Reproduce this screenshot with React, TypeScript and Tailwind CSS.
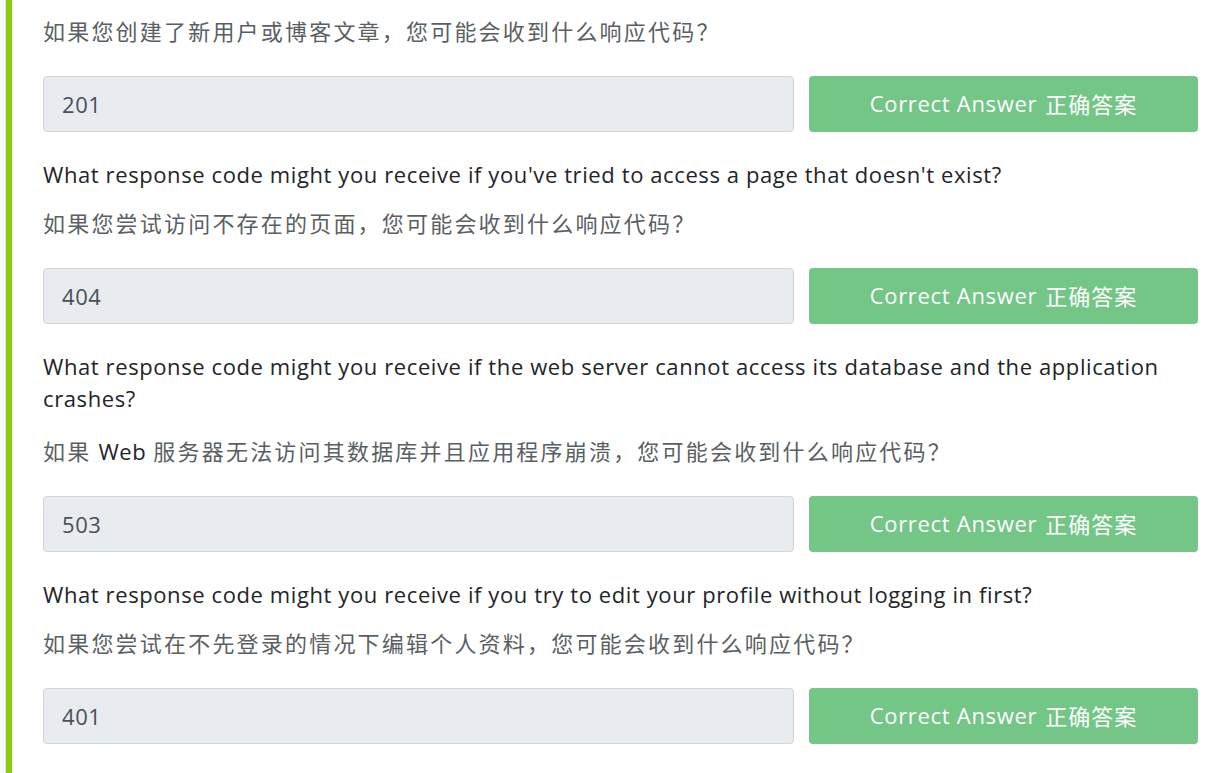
import React from "react";

const latin = { fontFamily: '"Open Sans", "Noto Sans CJK SC", sans-serif' };
const cjk = { fontFamily: '"Noto Sans CJK SC", sans-serif' };

type Q = { en?: string; zh: React.ReactNode; answer: string; tall?: boolean };

const questions: Q[] = [
  {
    zh: "如果您创建了新用户或博客文章，您可能会收到什么响应代码？",
    answer: "201",
  },
  {
    en: "What response code might you receive if you've tried to access a page that doesn't exist?",
    zh: "如果您尝试访问不存在的页面，您可能会收到什么响应代码？",
    answer: "404",
  },
  {
    en: "What response code might you receive if the web server cannot access its database and the application crashes?",
    zh: (
      <>
        如果
        <span className="text-[22px] leading-none tracking-[0.6px] text-[#212529] mx-[7px]" style={latin}>
          Web
        </span>
        服务器无法访问其数据库并且应用程序崩溃，您可能会收到什么响应代码？
      </>
    ),
    answer: "503",
    tall: true,
  },
  {
    en: "What response code might you receive if you try to edit your profile without logging in first?",
    zh: "如果您尝试在不先登录的情况下编辑个人资料，您可能会收到什么响应代码？",
    answer: "401",
  },
];

export default function App() {
  return (
    <div className="flex min-h-[773px] w-[1215px] bg-white overflow-hidden" style={latin}>
      <div className="w-[6px] bg-[#f8f9fa] border-r border-[#e3e6e8]" />
      <div className="w-[6px] bg-[#8ccc0e]" />
      <div className="flex-1 pl-[31px] pr-[17px] pt-[14px]">
        {questions.map((q, i) => (
          <div key={i} className={i === 0 ? "" : "mt-[26px]"}>
            {q.en && (
              <p
                className={
                  "text-[22px] leading-[32px] tracking-[0.6px] text-[#212529] " +
                  (q.tall ? "mb-[20px]" : "mb-[16px]")
                }
              >
                {q.en}
              </p>
            )}
            <p className="h-[32px] text-[22px] leading-[32px] tracking-[2.2px] text-[#5a5f64] whitespace-nowrap" style={cjk}>
              {q.zh}
            </p>
            <div className="mt-[30px] flex gap-[15px]">
              <div className="flex-1 h-[56px] rounded-[4px] border border-[#ced4da] bg-[#e9ecef] flex items-center px-[18px] text-[22px] tracking-[0.6px] text-[#495057]">
                {q.answer}
              </div>
              <button className="w-[389px] h-[56px] rounded-[4px] bg-[#73c686] text-white text-[22px] tracking-[0.7px] flex items-center justify-center pb-[2px]">
                Correct Answer
                <span className="ml-[8px] tracking-[1px]" style={cjk}>
                  正确答案
                </span>
              </button>
            </div>
          </div>
        ))}
      </div>
    </div>
  );
}
